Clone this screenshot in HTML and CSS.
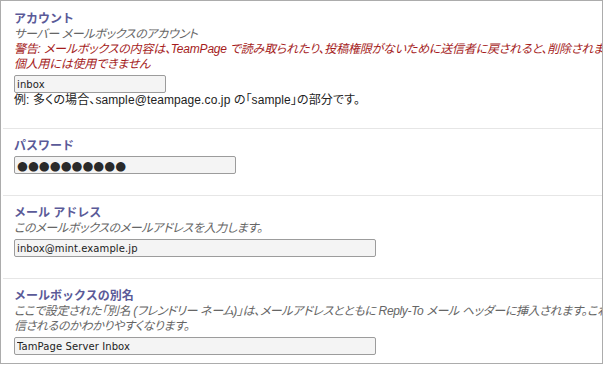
FILE: index.html
```html
<!DOCTYPE html>
<html>
<head>
    <meta charset="UTF-8">
    <link rel="stylesheet" href="styles.css">
</head>
<body>
    <div class="panel">
        <section class="field">
            <h2>アカウント</h2>
            <p class="hint">サーバー メールボックスのアカウント</p>
            <p class="warn">警告: メールボックスの内容は、TeamPage で読み取られたり、投稿権限がないために送信者に戻されると、削除されます。このメールボックスは<br>個人用には使用できません</p>
            <input class="box size-s" type="text" value="inbox">
            <p class="note">例: 多くの場合、sample@teampage.co.jp の「sample」の部分です。</p>
        </section>
        <section class="field">
            <h2>パスワード</h2>
            <input class="box size-m dots" type="text" value="●●●●●●●●●●">
        </section>
        <section class="field">
            <h2>メール アドレス</h2>
            <p class="hint">このメールボックスのメールアドレスを入力します。</p>
            <input class="box size-l" type="text" value="inbox@mint.example.jp">
        </section>
        <section class="field">
            <h2>メールボックスの別名</h2>
            <p class="hint">ここで設定された「別名 (フレンドリー ネーム)」は、メールアドレスとともに Reply-To メール ヘッダーに挿入されます。これにより、メッセージがどこから送<br>信されるのかわかりやすくなります。</p>
            <input class="box size-l" type="text" value="TamPage Server Inbox">
        </section>
    </div>
</body>
</html>
```

FILE: styles.css
```css
body {
    margin: 0;
    background: #fff;
    font-family: 'Liberation Sans', 'Noto Sans CJK JP', sans-serif;
    font-size: 12px;
    color: #222;
}

.panel {
    width: 603px;
    height: 364px;
    box-sizing: border-box;
    border: 1px solid #acacac;
    overflow: hidden;
}

.field {
    margin-left: 2px;
    padding: 9px 0 21px 11px;
    border-top: 1px solid #e6e6e6;
}

.field:first-child {
    border-top: 0;
    padding-top: 10px;
}

h2 {
    margin: 0;
    font-size: 12px;
    line-height: 16px;
    font-weight: bold;
    color: #5a5a98;
}

p {
    margin: 0;
    line-height: 15px;
    white-space: nowrap;
    font-feature-settings: "palt";
}

.hint {
    font-style: italic;
    color: #666;
    letter-spacing: -0.35px;
}

.warn {
    font-style: italic;
    color: #a51c1c;
    letter-spacing: -0.2px;
}

.note {
    line-height: 14px;
    color: #222;
    letter-spacing: 0.1px;
}

.box {
    display: block;
    box-sizing: border-box;
    height: 18px;
    margin: 2px 0 0;
    padding: 0 2px;
    border: 1px solid #9c9c9c;
    border-radius: 2px;
    background: #f4f4f4;
    font-family: 'DejaVu Sans', sans-serif;
    font-size: 10px;
    letter-spacing: 0.1px;
    color: #222;
}

p + .box {
    margin-top: 3px;
}

.size-s { width: 152px; }
.size-m { width: 222px; }
.size-l { width: 362px; }

.dots {
    font-size: 12.5px;
    letter-spacing: 0;
    color: #2a2a2a;
}
```
